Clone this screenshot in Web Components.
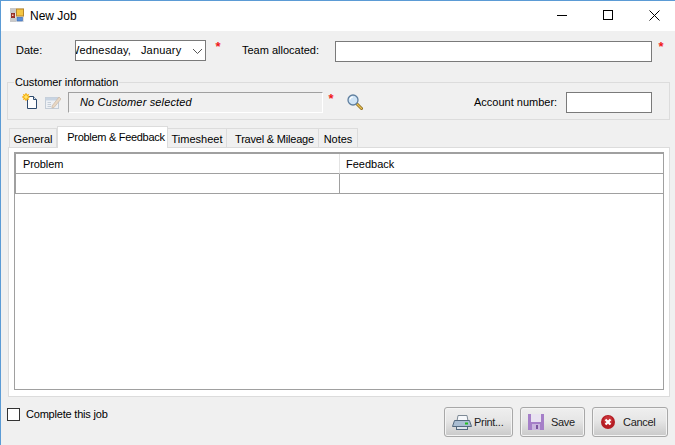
<!DOCTYPE html>
<html>
<head>
<meta charset="utf-8">
<title>New Job</title>
<style>
  html, body { margin: 0; padding: 0; background: #f0f0f0; }
  body { font: 11px "Liberation Sans", sans-serif; color: #000; }
</style>
</head>
<body>
<job-window>
  <title-bar slot="title">New Job</title-bar>

  <form-row style="--row-height:21px; --row-top:9px">
    <field-label style="width:59px; margin-left:15px">Date:</field-label>
    <text-box style="width:131px; letter-spacing:.2px" combo indent="-7">Wednesday,&nbsp;&nbsp; January</text-box>
    <required-mark style="margin-left:8px"></required-mark>
    <field-label style="margin-left:20px; width:93px">Team allocated:</field-label>
    <text-box style="width:317px; margin-top:1px"></text-box>
    <required-mark style="margin-left:5px"></required-mark>
  </form-row>

  <group-box legend="Customer information">
    <icon-new style="margin-left:14px"></icon-new>
    <icon-edit style="margin-left:7px"></icon-edit>
    <text-box style="width:255px; margin-left:7px; letter-spacing:.15px" readonly><i>No Customer selected</i></text-box>
    <required-mark style="margin-left:4px; align-self:flex-start"></required-mark>
    <icon-search style="margin-left:12px"></icon-search>
    <field-label style="margin-left:111px; width:92px">Account number:</field-label>
    <text-box style="width:86px"></text-box>
  </group-box>

  <tab-strip>
    <tab-item style="width:48px">General</tab-item>
    <tab-item style="width:111px; letter-spacing:-.3px; padding-left:7px" active>Problem &amp; Feedback</tab-item>
    <tab-item style="width:59px">Timesheet</tab-item>
    <tab-item style="width:92px; letter-spacing:-.2px; padding-left:4px">Travel &amp; Mileage</tab-item>
    <tab-item style="width:39px">Notes</tab-item>
  </tab-strip>
  <tab-panel>
    <job-grid first="Problem" second="Feedback"></job-grid>
  </tab-panel>

  <foot-bar>
    <check-box>Complete this job</check-box>
    <span slot="actions" style="display:flex">
      <push-button style="width:69px" kind="print">Print...</push-button>
      <push-button style="width:65px; margin-left:7px" kind="save">Save</push-button>
      <push-button style="width:76px; margin-left:7px" kind="cancel">Cancel</push-button>
    </span>
  </foot-bar>
</job-window>

<script>
function define(name, html, attrs) {
  const template = document.createElement('template');
  template.innerHTML = html;
  class Comp extends HTMLElement {
    constructor() {
      super();
      this.attachShadow({ mode: 'open' });
      this.shadowRoot.appendChild(template.content.cloneNode(true));
    }
    connectedCallback() {
      if (attrs) attrs(this, this.shadowRoot);
    }
  }
  customElements.define(name, Comp);
}

define('job-window', `
<style>
  :host { display: block; width: 675px; height: 445px; box-sizing: border-box; overflow: hidden;
    background: #f0f0f0; border-top: 1px solid #5b9bd5; border-left: 1px solid #5b9bd5; }
</style>
<slot name="title"></slot><slot></slot>`);

define('title-bar', `
<style>
  :host { display: flex; align-items: center; height: 30px; background: #fff; font-size: 12px; }
  svg { display: block; flex: none; }
  .logo { margin: 0 6px 2px 9px; width: 14px; height: 14px; }
  .name { flex: 1; }
  .ctl { width: 46px; height: 28px; align-self: flex-start; display: flex; align-items: center; justify-content: center; }
  .ctl:last-child { margin-right: -2px; }
</style>
<svg class="logo" viewBox="0 0 14 14">
  <rect width="14" height="14" fill="#e2e2e2"/>
  <path d="M0 0H6V5H0ZM0 10H6V14H0Z" fill="#c9c9c9"/>
  <rect x="1.3" y="5.3" width="3.4" height="4.4" fill="#b02a20" stroke="#7a1a12" stroke-width="0.6"/>
  <rect x="2" y="6.5" width="1.5" height="1.5" fill="#f0d0c0"/>
  <rect x="6.5" y="1" width="7" height="7" fill="#f4c542" stroke="#b8862a"/>
  <rect x="7" y="9.3" width="5.4" height="3.7" fill="#5a8fd8" stroke="#3a6ab0" stroke-width="0.6"/>
</svg>
<span class="name"><slot></slot></span>
<div class="ctl"><svg width="11" height="11" viewBox="0 0 11 11"><path d="M0 5.5H10" stroke="#000" fill="none"/></svg></div>
<div class="ctl"><svg width="11" height="11" viewBox="0 0 11 11"><rect x=".5" y=".5" width="9" height="9" stroke="#000" fill="none"/></svg></div>
<div class="ctl"><svg width="11" height="11" viewBox="0 0 11 11"><path d="M.5 .5L10.5 10.5M10.5 .5L.5 10.5" stroke="#000" fill="none"/></svg></div>`);

define('form-row', `
<style>
  :host { display: flex; align-items: flex-start; height: var(--row-height); margin-top: var(--row-top); }
</style>
<slot></slot>`);

define('field-label', `
<style>
  :host { display: block; flex: none; line-height: 21px; white-space: nowrap; }
</style>
<slot></slot>`);

define('text-box', `
<style>
  :host { display: block; flex: none; box-sizing: border-box; height: 21px; background: #fff; overflow: hidden;
    border: 1px solid #7a7a7a; position: relative; }
  :host([readonly]) { background: #f0f0f0; border-color: #a0a0a0 #fff #fff #a0a0a0; }
  :host([readonly]) .txt { padding-left: 11px; }
  .txt { line-height: 19px; white-space: nowrap; overflow: hidden; height: 19px; }
  svg { display: none; position: absolute; right: 0; top: 0; background: #fff; }
  :host([combo]) svg { display: block; }
</style>
<div class="txt"><slot></slot></div>
<svg width="17" height="19" viewBox="0 0 17 19"><path d="M5 8L9.5 12.5L14 8" stroke="#555" fill="none"/></svg>`,
(el, root) => {
  const indent = el.getAttribute('indent');
  if (indent) root.querySelector('.txt').style.marginLeft = indent + 'px';
});

define('required-mark', `
<style>
  :host { display: block; flex: none; width: 8px; text-align: center; color: #f01818; font: bold 13px/14px "Liberation Sans", sans-serif; }
</style>
*`);

define('group-box', `
<style>
  :host { display: block; box-sizing: border-box; position: relative; width: 663px; height: 38px;
    margin: 21px 0 0 6px; border: 1px solid #dcdcdc; }
  .legend { position: absolute; left: 6px; top: -7px; background: #f0f0f0; padding: 0 1px; line-height: 13px; white-space: nowrap; letter-spacing: -.1px; }
  .row { display: flex; align-items: center; height: 21px; margin-top: 9px; }
</style>
<div class="legend"></div>
<div class="row"><slot></slot></div>`,
(el, root) => { root.querySelector('.legend').textContent = el.getAttribute('legend'); });

define('icon-new', `
<style>:host { display: block; flex: none; width: 16px; height: 17px; margin-bottom: 2px; } svg { display: block; }</style>
<svg width="16" height="17" viewBox="0 0 16 17">
  <path d="M5.5 3.5H11.5L14.5 6.5V15.5H5.5Z" fill="#fdfdfd" stroke="#2e4a6e"/>
  <path d="M11.5 3.5V6.5H14.5" fill="#dfe6ee" stroke="#2e4a6e"/>
  <circle cx="4" cy="4" r="3" fill="#ffd21e"/>
  <path d="M4 0V8M0 4H8M1.3 1.3L6.7 6.7M6.7 1.3L1.3 6.7" stroke="#f09a10"/>
  <circle cx="4" cy="4" r="1.8" fill="#ffe36a"/>
</svg>`);

define('icon-edit', `
<style>:host { display: block; flex: none; width: 16px; height: 16px; margin-bottom: 2px; } svg { display: block; }</style>
<svg width="16" height="16" viewBox="0 0 16 16">
  <rect x="0.5" y="3.5" width="13" height="11" fill="#eef1f5" stroke="#c3ccd6"/>
  <path d="M0.5 3.5H13.5V6.5H0.5Z" fill="#c8d4e2"/>
  <path d="M2.5 8.5H6M2.5 10.5H6M2.5 12.5H6" stroke="#c5ced8"/>
  <path d="M7 12L14 3L16 5L9 13.5L7 14Z" fill="#e9d8c4" stroke="#c9b8a6" stroke-width="0.7"/>
</svg>`);

define('icon-search', `
<style>:host { display: block; flex: none; width: 16px; height: 16px; margin-bottom: 2px; } svg { display: block; }</style>
<svg width="16" height="16" viewBox="0 0 16 16">
  <path d="M9.5 9.5L14.5 14.5" stroke="#8a6a20" stroke-width="3" stroke-linecap="round"/>
  <path d="M9.5 9.5L14.5 14.5" stroke="#e8c050" stroke-width="1.4" stroke-linecap="round"/>
  <circle cx="6" cy="6" r="5" fill="#cfe4f6" stroke="#5f7f9f" stroke-width="1.3"/>
  <path d="M3 5.5A3 3 0 0 1 6 3" stroke="#fff" stroke-width="1.2" fill="none"/>
</svg>`);

define('tab-strip', `
<style>
  :host { display: flex; align-items: flex-end; height: 21px; margin: 6px 0 0 8px; position: relative; z-index: 1; }
</style>
<slot></slot>`);

define('tab-item', `
<style>
  :host { display: block; flex: none; box-sizing: border-box; height: 19px; background: #f0f0f0; text-align: center;
    border: 1px solid #dcdcdc; border-bottom: 0; border-left-width: 0; line-height: 19px; padding-top: 1px; white-space: nowrap; }
  :host(:first-child) { border-left-width: 1px; }
  :host([active]) { background: #fff; border-left-width: 1px; margin-bottom: -1px; height: 22px; }
</style>
<slot></slot>`);

define('tab-panel', `
<style>
  :host { display: block; box-sizing: border-box; width: 662px; height: 250px; margin-left: 7px; background: #fff;
    border: 1px solid #dcdcdc; padding: 4px 5px 6px 5px; }
</style>
<slot></slot>`);

define('job-grid', `
<style>
  :host { display: block; box-sizing: border-box; height: 238px; border: 1px solid #a0a0a0; background: #fff; }
  .grid { display: grid; grid-template-columns: 324px 1fr; grid-template-rows: 20px 20px; border-top: 1px solid #a0a0a0; border-left: 1px solid #a0a0a0; }
  .cell { box-sizing: border-box; border-bottom: 1px solid #a0a0a0; border-right: 1px solid #a0a0a0; padding-left: 6px; line-height: 20px; white-space: nowrap; }
  .head { border-right-color: #e3e3e3; }
  #a { padding-left: 7px; letter-spacing: -.1px; }
  .cell:nth-child(even) { border-right: 0; }
</style>
<div class="grid">
  <div class="cell head" id="a"></div>
  <div class="cell head" id="b"></div>
  <div class="cell"></div>
  <div class="cell"></div>
</div>`,
(el, root) => {
  root.getElementById('a').textContent = el.getAttribute('first');
  root.getElementById('b').textContent = el.getAttribute('second');
});

define('foot-bar', `
<style>
  :host { display: flex; justify-content: space-between; align-items: flex-start; margin-top: 10px; padding: 0 7px 0 6px; }
</style>
<slot></slot><slot name="actions"></slot>`);

define('check-box', `
<style>
  :host { display: flex; align-items: center; height: 14px; white-space: nowrap; letter-spacing: -.2px; }
  .box { box-sizing: border-box; width: 13px; height: 13px; border: 1px solid #333; background: #fff; margin-right: 6px; }
</style>
<div class="box"></div><slot></slot>`);

const buttonIcons = {
  print: `<svg width="20" height="15" viewBox="0 0 20 15">
    <path d="M6 .5H15L16 6H5Z" fill="#f6f8fb" stroke="#7e8a96"/>
    <path d="M2.5 5.5H17.5L19.5 11.5H.5Z" fill="#a9bdd2" stroke="#54697e"/>
    <rect x="4.5" y="11.5" width="11" height="3" fill="#dfe6ee" stroke="#54697e"/>
    <rect x="13" y="7.5" width="3" height="2" fill="#22c020"/>
  </svg>`,
  save: `<svg width="16" height="16" viewBox="0 0 16 16">
    <rect width="16" height="16" fill="#a57fc8"/>
    <rect x="3" y="0" width="10" height="8" fill="#e9e3f1"/>
    <rect x="4" y="10" width="8" height="6" fill="#c9b6de"/>
    <rect x="8" y="11" width="2" height="4" fill="#7a559e"/>
  </svg>`,
  cancel: `<svg width="14" height="14" viewBox="0 0 14 14">
    <circle cx="7" cy="7" r="7" fill="#b51d24"/>
    <circle cx="7" cy="5.5" r="4.5" fill="#d6454a" opacity=".6"/>
    <path d="M4.5 4.5L9.5 9.5M9.5 4.5L4.5 9.5" stroke="#fff" stroke-width="2.2"/>
  </svg>`
};

define('push-button', `
<style>
  :host { display: flex; align-items: center; box-sizing: border-box; height: 30px; letter-spacing: -.3px; color: #222;
    border: 1px solid #a8a8a8; border-radius: 3px; box-shadow: inset 0 0 0 1px #f4f4f4;
    background: linear-gradient(#efefef, #e6e6e6 45%, #c9c9c9); white-space: nowrap; }
  #ico { display: block; flex: none; margin-left: 7px; }
  #ico svg { display: block; }
  .txt { margin-left: 2px; }
  :host([kind="save"]) .txt { margin-left: 7px; }
  :host([kind="cancel"]) #ico { margin-left: 8px; }
  :host([kind="cancel"]) .txt { margin-left: 8px; }
</style>
<div id="ico"></div><span class="txt"><slot></slot></span>`,
(el, root) => { root.getElementById('ico').innerHTML = buttonIcons[el.getAttribute('kind')]; });
</script>
</body>
</html>
